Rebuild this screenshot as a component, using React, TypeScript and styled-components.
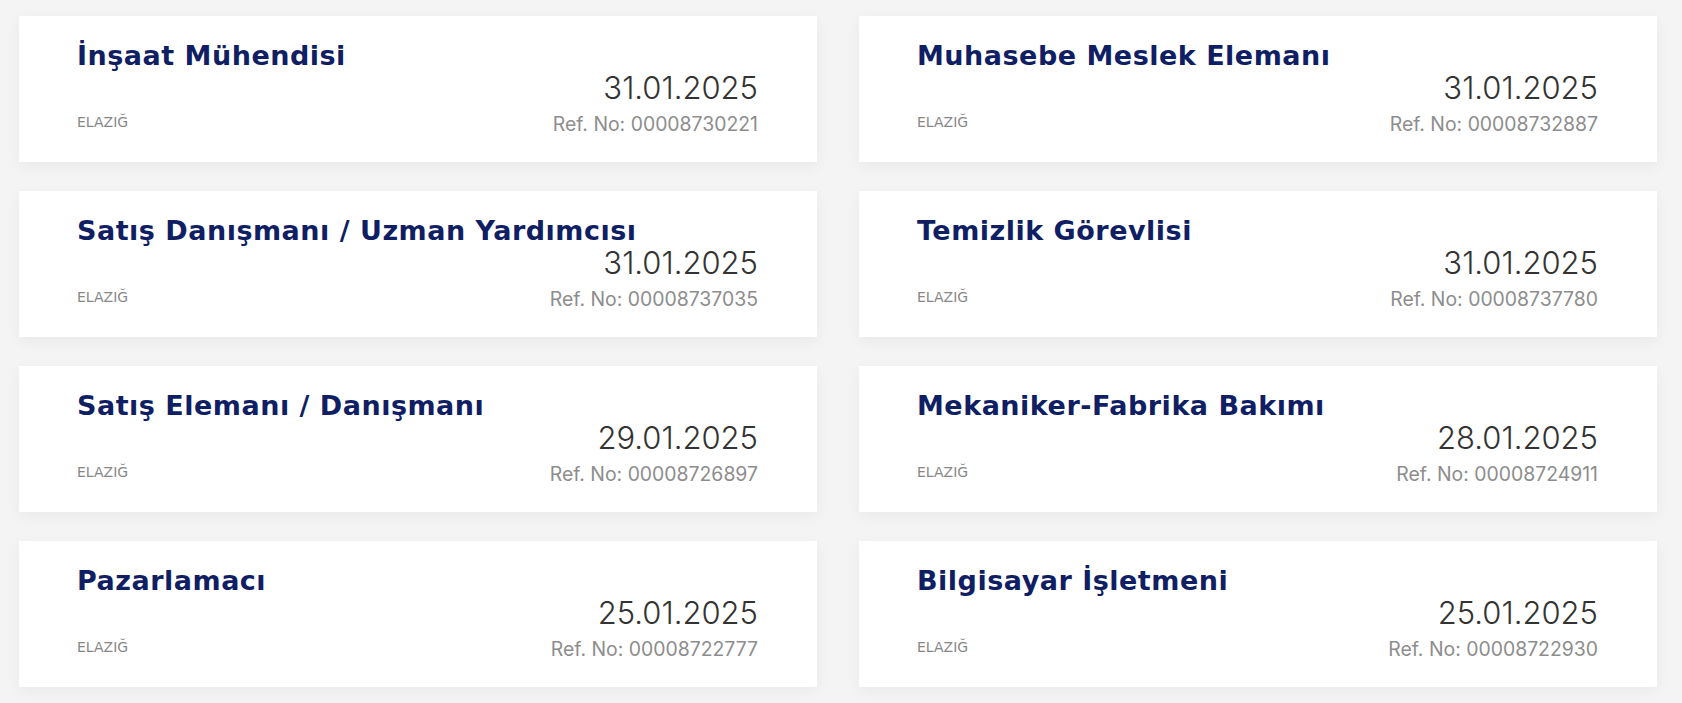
import React from 'react';
import styled, { createGlobalStyle } from 'styled-components';

const GlobalStyle = createGlobalStyle`
  * {
    box-sizing: border-box;
  }
  body {
    margin: 0;
    background: #f4f4f4;
    font-family: Inter, "Noto Sans", sans-serif;
  }
`;

const JobGrid = styled.ul`
  list-style: none;
  margin: 0;
  padding: 16px 25px 15px 19px;
  display: grid;
  grid-template-columns: 1fr 1fr;
  column-gap: 42px;
  row-gap: 29px;
`;

const JobCard = styled.li`
  background: #ffffff;
  height: 146px;
  padding: 23px 59px 0 58px;
  box-shadow: 0 4px 14px rgba(0, 0, 0, 0.05);
  display: flex;
  flex-direction: column;
`;

const Title = styled.h3`
  margin: 0;
  font-family: "DejaVu Sans", Inter, sans-serif;
  font-size: 27px;
  line-height: 34px;
  font-weight: 700;
  letter-spacing: 0.5px;
  color: #101e64;
  white-space: nowrap;
`;

const Bottom = styled.div`
  display: flex;
  justify-content: space-between;
  align-items: flex-end;
`;

const City = styled.span`
  font-family: "DejaVu Sans", Inter, sans-serif;
  font-size: 14px;
  line-height: 16px;
  color: #878787;
  margin-bottom: 6px;
`;

const Meta = styled.div`
  display: flex;
  flex-direction: column;
  align-items: flex-end;
`;

const Date = styled.span`
  font-size: 31px;
  line-height: 30px;
  font-weight: 300;
  color: #333333;
`;

const RefNo = styled.span`
  margin-top: 9px;
  font-size: 19.4px;
  line-height: 24px;
  color: #8d8d8d;
`;

type Job = { title: string; date: string; ref: string };

const jobs: Job[] = [
  { title: 'İnşaat Mühendisi', date: '31.01.2025', ref: '00008730221' },
  { title: 'Muhasebe Meslek Elemanı', date: '31.01.2025', ref: '00008732887' },
  { title: 'Satış Danışmanı / Uzman Yardımcısı', date: '31.01.2025', ref: '00008737035' },
  { title: 'Temizlik Görevlisi', date: '31.01.2025', ref: '00008737780' },
  { title: 'Satış Elemanı / Danışmanı', date: '29.01.2025', ref: '00008726897' },
  { title: 'Mekaniker-Fabrika Bakımı', date: '28.01.2025', ref: '00008724911' },
  { title: 'Pazarlamacı', date: '25.01.2025', ref: '00008722777' },
  { title: 'Bilgisayar İşletmeni', date: '25.01.2025', ref: '00008722930' },
];

function App() {
  return (
    <>
      <GlobalStyle />
      <JobGrid>
        {jobs.map((job) => (
          <JobCard key={job.ref}>
            <Title>{job.title}</Title>
            <Bottom>
              <City>ELAZIĞ</City>
              <Meta>
                <Date>{job.date}</Date>
                <RefNo>Ref. No: {job.ref}</RefNo>
              </Meta>
            </Bottom>
          </JobCard>
        ))}
      </JobGrid>
    </>
  );
}

export default App;
